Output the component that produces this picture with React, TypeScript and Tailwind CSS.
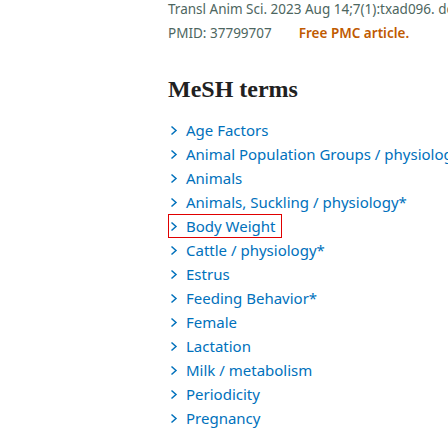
import React from "react";

const terms = [
  "Age Factors",
  "Animal Population Groups / physiology*",
  "Animals",
  "Animals, Suckling / physiology*",
  "Body Weight",
  "Cattle / physiology*",
  "Estrus",
  "Feeding Behavior*",
  "Female",
  "Lactation",
  "Milk / metabolism",
  "Periodicity",
  "Pregnancy",
];

function Chevron() {
  return (
    <svg width="8" height="11" viewBox="0 0 8 11" className="shrink-0">
      <path d="M1.5 1.5 L6 5.5 L1.5 9.5" fill="none" stroke="#0071bc" strokeWidth="1.5" />
    </svg>
  );
}

export default function App() {
  return (
    <div className="w-[448px] h-[448px] overflow-hidden bg-white" style={{ fontFamily: '"Noto Sans", "Open Sans", sans-serif' }}>
      <div className="pl-[168px] mt-[-3px] whitespace-nowrap">
        <div className="text-[13.5px] leading-[24px] text-[#4d6660]">Transl Anim Sci. 2023 Aug 14;7(1):txad096. doi: 10.1093/tas/txad096.</div>
        <div className="flex text-[13.5px] leading-[24px]">
          <span className="text-[#4d6660]">PMID: 37799707</span>
          <span className="ml-[27px] font-semibold text-[#c05a00]">Free PMC article.</span>
        </div>
        <h2
          className="mt-[29px] text-[24px] leading-[30px] font-bold text-[#212121]"
          style={{ fontFamily: '"Liberation Serif", "DejaVu Serif", serif' }}
        >
          MeSH terms
        </h2>
        <ul className="mt-[14px] flex flex-col">
          {terms.map((t) => (
            <li key={t} className="h-[24px] flex items-center">
              <div
                className={
                  "flex items-center gap-[8px] h-[24px] pl-[1px] pr-[5px] " +
                  (t === "Body Weight" ? "border border-[#e00000]" : "border border-transparent")
                }
              >
                <Chevron />
                <span className="text-[15px] leading-[22px] text-[#0071bc]">{t}</span>
              </div>
            </li>
          ))}
        </ul>
      </div>
    </div>
  );
}
